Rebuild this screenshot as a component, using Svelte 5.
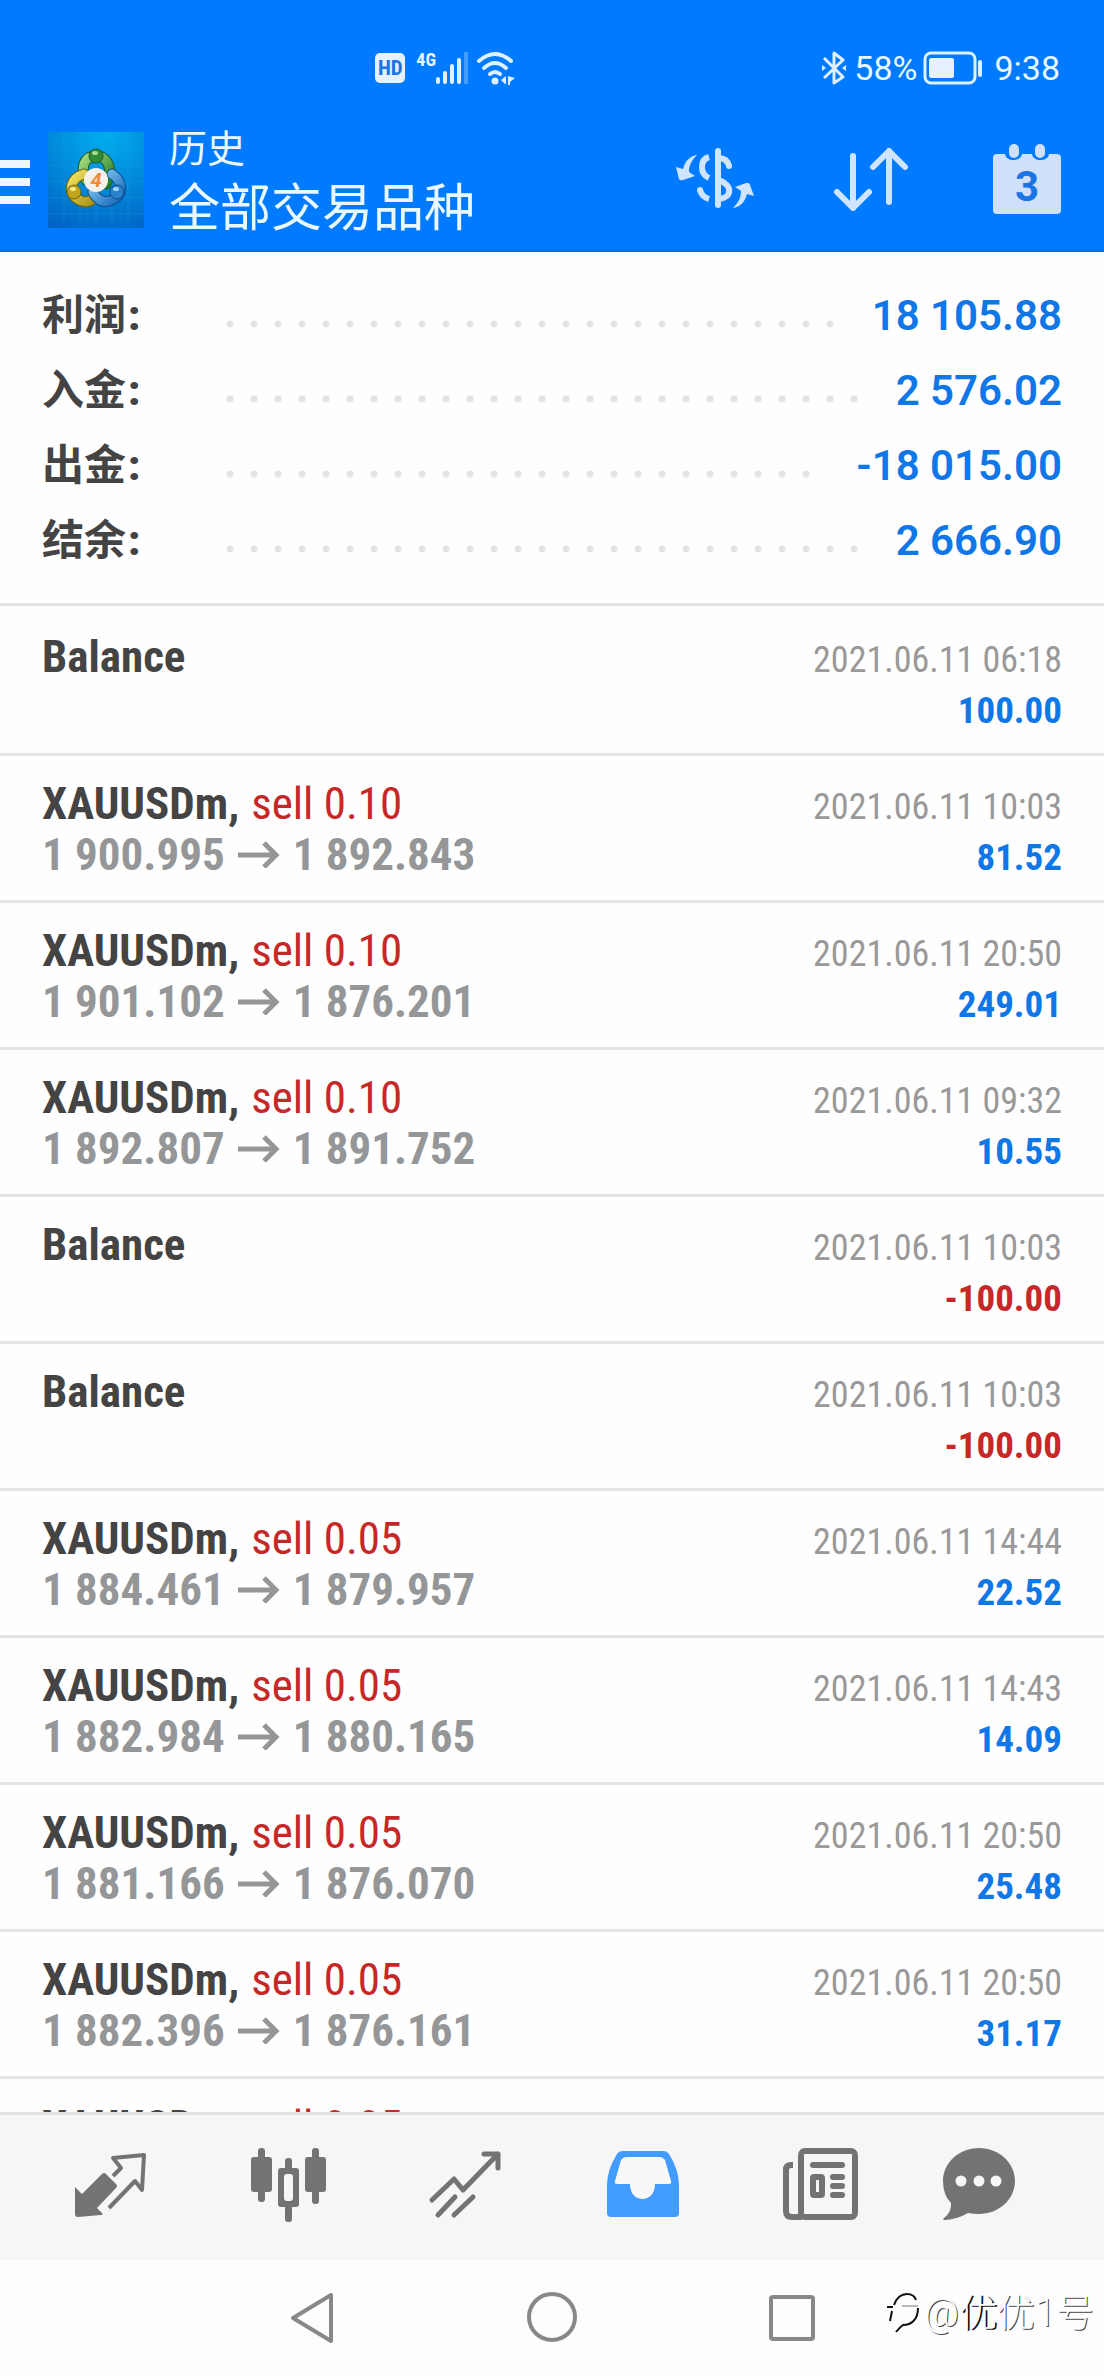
<script>
  const summary = [
    { label: '利润', value: '18 105.88' },
    { label: '入金', value: '2 576.02' },
    { label: '出金', value: '-18 015.00' },
    { label: '结余', value: '2 666.90' },
  ];

  const deals = [
    { name: 'Balance', time: '2021.06.11 06:18', profit: '100.00' },
    { name: 'XAUUSDm,', side: 'sell 0.10', from: '1 900.995', to: '1 892.843', time: '2021.06.11 10:03', profit: '81.52' },
    { name: 'XAUUSDm,', side: 'sell 0.10', from: '1 901.102', to: '1 876.201', time: '2021.06.11 20:50', profit: '249.01' },
    { name: 'XAUUSDm,', side: 'sell 0.10', from: '1 892.807', to: '1 891.752', time: '2021.06.11 09:32', profit: '10.55' },
    { name: 'Balance', time: '2021.06.11 10:03', profit: '-100.00' },
    { name: 'Balance', time: '2021.06.11 10:03', profit: '-100.00' },
    { name: 'XAUUSDm,', side: 'sell 0.05', from: '1 884.461', to: '1 879.957', time: '2021.06.11 14:44', profit: '22.52' },
    { name: 'XAUUSDm,', side: 'sell 0.05', from: '1 882.984', to: '1 880.165', time: '2021.06.11 14:43', profit: '14.09' },
    { name: 'XAUUSDm,', side: 'sell 0.05', from: '1 881.166', to: '1 876.070', time: '2021.06.11 20:50', profit: '25.48' },
    { name: 'XAUUSDm,', side: 'sell 0.05', from: '1 882.396', to: '1 876.161', time: '2021.06.11 20:50', profit: '31.17' },
    { name: 'XAUUSDm,', side: 'sell 0.05' },
  ];
</script>

<div class="screen">
  <header>
    <div class="status">
      <div class="group">
        <span class="hd">HD</span>
        <span class="net">4G</span>
        <svg class="signal" width="33" height="32" viewBox="0 0 33 32" fill="#dff0ff" aria-hidden="true">
          <rect x="0" y="25" width="4" height="7" rx="2" />
          <rect x="7" y="19" width="4" height="13" rx="2" />
          <rect x="14" y="12" width="4" height="20" rx="2" />
          <rect x="21" y="6" width="4" height="26" rx="2" />
          <rect x="28" y="0" width="4" height="32" rx="1" opacity=".3" />
        </svg>
        <svg width="38" height="34" viewBox="0 0 38 34" aria-hidden="true">
          <g fill="none" stroke="#dff0ff" stroke-width="4" stroke-linecap="round">
            <path d="M2 10Q18 -4 34 10" />
            <path d="M7 17Q18 7 29 17" />
            <path d="M13 23Q18 19 23 23" />
          </g>
          <circle cx="18" cy="30" r="3.5" fill="#dff0ff" />
          <path d="M29 25v8h-1l-4-4zM31 25v9h2v-3l5-4z" fill="#dff0ff" />
        </svg>
      </div>
      <div class="group right">
        <svg class="bt" width="24" height="34" viewBox="0 0 24 34" fill="none" stroke="#dff0ff" stroke-width="3" stroke-linejoin="round" aria-hidden="true">
          <path d="M2 7l19 19-9 6V2l9 7L2 27" />
          <path d="M0 14l4 3-4 3zM24 14l-4 3 4 3z" fill="#dff0ff" stroke="none" />
        </svg>
        <span>58%</span>
        <svg class="battery" width="60" height="34" viewBox="0 0 60 34" aria-hidden="true">
          <rect x="2" y="2" width="50" height="30" rx="6" fill="none" stroke="#dff0ff" stroke-width="3" />
          <rect x="6" y="7" width="25" height="20" rx="2" fill="#e6f1ff" />
          <rect x="55" y="9" width="4" height="17" rx="2" fill="#dff0ff" />
        </svg>
        <span>9:38</span>
      </div>
    </div>

    <div class="bar">
      <button class="menu" aria-label="菜单"><i></i><i></i><i></i></button>
      <svg class="logo" width="96" height="96" viewBox="0 0 96 96" aria-hidden="true">
        <defs>
          <radialGradient id="sky" cx=".6" cy="0" r="1.1">
            <stop offset="0" stop-color="#00aeee" />
            <stop offset=".5" stop-color="#008bdc" />
            <stop offset="1" stop-color="#0064c4" />
          </radialGradient>
          <linearGradient id="green" x1="0" y1="0" x2="1" y2="1">
            <stop offset="0" stop-color="#a4dc7c" /><stop offset="1" stop-color="#22802a" />
          </linearGradient>
          <linearGradient id="gold" x1="0" y1="0" x2="1" y2="1">
            <stop offset="0" stop-color="#f0e460" /><stop offset="1" stop-color="#a89010" />
          </linearGradient>
          <linearGradient id="azure" x1="0" y1="0" x2="1" y2="1">
            <stop offset="0" stop-color="#8cd0f8" /><stop offset="1" stop-color="#1468b8" />
          </linearGradient>
        </defs>
        <rect width="96" height="96" fill="url(#sky)" />
        <path d="M16 0v96M32 0v96M48 0v96M64 0v96M80 0v96M0 18h96M0 34h96M0 50h96M0 66h96M0 82h96" stroke="#4fc3f7" stroke-opacity=".15" />
        <g fill="none" stroke-linecap="round">
          <path d="M38 48C32 36 36 24 48 24S66 38 58 52" stroke="#1c5a24" stroke-width="11" />
          <path d="M38 48C32 36 36 24 48 24S66 38 58 52" stroke="url(#green)" stroke-width="9" />
          <path d="M36 42C22 46 20 60 28 66S44 70 48 64" stroke="#6f6210" stroke-width="11" />
          <path d="M36 42C22 46 20 60 28 66S44 70 48 64" stroke="url(#gold)" stroke-width="9" />
          <path d="M64 42C76 50 74 62 66 67S50 70 45 60" stroke="#104a86" stroke-width="11" />
          <path d="M64 42C76 50 74 62 66 67S50 70 45 60" stroke="url(#azure)" stroke-width="9" />
        </g>
        <circle cx="48" cy="24" r="7" fill="#2f8c34" stroke="#1c5a24" />
        <circle cx="26" cy="60" r="7" fill="#c0a41c" stroke="#6f6210" />
        <circle cx="69" cy="60" r="7" fill="#2c80cc" stroke="#104a86" />
        <ellipse cx="47" cy="21" rx="3" ry="2" fill="#a8dc90" />
        <ellipse cx="25" cy="57" rx="3" ry="2" fill="#f4e888" />
        <ellipse cx="68" cy="57" rx="3" ry="2" fill="#a0d4fa" />
        <circle cx="48" cy="48" r="12" fill="#f4f0ec" />
        <text x="48" y="55" text-anchor="middle" font-family="Roboto, sans-serif" font-size="20" font-weight="700" font-style="italic" fill="#f08a34">4</text>
      </svg>
      <div class="titles">
        <span class="section">历史</span>
        <h1>全部交易品种</h1>
      </div>
      <div class="actions">
        <button aria-label="货币">
          <svg width="80" height="72" viewBox="14 14 80 72" fill="none" stroke="#cfe5ff" stroke-width="6" aria-hidden="true">
            <path d="M36 25C29 26 24 31 22 39L15 37L18 49Q19 51 22 50L34 46L28 42C28 35 31 30 36 25Z" fill="#cfe5ff" stroke="none" />
            <path d="M72 78C79 77 84 72 86 64L93 66L89 55Q88 52 85 53L74 57L80 61C80 68 77 73 72 78Z" fill="#cfe5ff" stroke="none" />
            <path d="M57 21V75" stroke-linecap="round" />
            <path d="M48 27Q41 29 41 37Q41 45 48 48M57 28C64 28 67 31 68 36M57 50C72 54 72 68 57 69M39 60Q41 67 48 69" />
            <circle cx="68" cy="36" r="3" fill="#cfe5ff" stroke="none" />
            <circle cx="39" cy="60" r="3" fill="#cfe5ff" stroke="none" />
          </svg>
        </button>
        <button aria-label="排序">
          <svg width="80" height="72" viewBox="0 0 80 72" fill="none" stroke="#cfe5ff" stroke-width="6" stroke-linecap="round" stroke-linejoin="round" aria-hidden="true">
            <path d="M22 12V64M6 48L22 64L38 48M58 58V7M42 23L58 7L74 23" />
          </svg>
        </button>
        <button aria-label="日期">
          <svg width="80" height="72" viewBox="0 0 80 72" fill="#cfe0fb" aria-hidden="true">
            <path d="M10 10H18C19 18 34 18 35 10H45C46 18 61 18 62 10H70Q74 10 74 14V66Q74 70 70 70H10Q6 70 6 66V14Q6 10 10 10Z" />
            <rect x="22" y="0" width="10" height="14" rx="5" />
            <rect x="48" y="0" width="10" height="14" rx="5" />
            <text x="40" y="57" text-anchor="middle" font-family="Roboto, sans-serif" font-size="42" font-weight="700" fill="#1a74e6">3</text>
          </svg>
        </button>
      </div>
    </div>
  </header>

  <dl class="summary">
    {#each summary as item}
      <div>
        <dt>{item.label}<b>:</b></dt>
        <dd class="leader" aria-hidden="true"></dd>
        <dd>{item.value}</dd>
      </div>
    {/each}
  </dl>

  <ul class="deals">
    {#each deals as deal}
      <li>
        <div class="line">
          <span class="name">{deal.name}</span>
          {#if deal.side}<span class="side">{deal.side}</span>{/if}
          {#if deal.time}<time>{deal.time}</time>{/if}
        </div>
        <div class="line">
          {#if deal.from}
            <span class="price">{deal.from}</span>
            <svg class="arrow" width="42" height="27" viewBox="0 0 42 27" fill="none" stroke="#949698" stroke-width="5" aria-label="→" role="img">
              <path d="M0 14H38M26 2L38 14L26 26" />
            </svg>
            <span class="price">{deal.to}</span>
          {/if}
          {#if deal.profit}
            <span class="profit" class:loss={deal.profit.startsWith('-')}>{deal.profit}</span>
          {/if}
        </div>
      </li>
    {/each}
  </ul>

  <nav class="tabs">
    <button aria-label="行情">
      <svg width="76" height="76" viewBox="0 0 76 76" fill="#737373" aria-hidden="true">
        <path d="M2 40L9 47L29 27Q31 25 33 27L43 37Q45 39 43 41L24 61L29 66Q30 68 28 68L5 70Q2 70 2 67Z" />
        <path d="M40 29L48 21L40 11L71 8L69 43L62 34L36 61" fill="none" stroke="#737373" stroke-width="4" stroke-linejoin="round" />
      </svg>
    </button>
    <button aria-label="图表">
      <svg width="76" height="76" viewBox="0 0 76 76" fill="#737373" aria-hidden="true">
        <rect x="1" y="10" width="21" height="35" rx="3" /><rect x="8" y="1" width="7" height="54" rx="3" />
        <rect x="55" y="10" width="21" height="35" rx="3" /><rect x="62" y="1" width="7" height="56" rx="3" />
        <rect x="35" y="11" width="7" height="64" rx="3" /><rect x="28" y="21" width="21" height="39" rx="3" />
        <rect x="34" y="27" width="9" height="27" rx="3" fill="#f6f6f6" />
      </svg>
    </button>
    <button aria-label="交易">
      <svg width="76" height="76" viewBox="0 0 76 76" fill="none" stroke="#737373" stroke-width="5" stroke-linecap="round" stroke-linejoin="round" aria-hidden="true">
        <path d="M5 53L27 32L36 43L71 7M57 7H71V21M11 68L28 50M27 68L46 50" />
      </svg>
    </button>
    <button aria-label="历史" aria-current="page">
      <svg width="76" height="76" viewBox="0 0 76 76" aria-hidden="true">
        <path d="M18 4H58Q62 4 64 7Q74 23 74 38V66Q74 70 70 70H6Q2 70 2 66V38Q2 23 12 7Q14 4 18 4Z" fill="#429bff" />
        <path d="M21 10H55Q58 10 60 13L66 34Q67 37 64 37H50C50 57 25 57 25 37H12Q9 37 10 34L16 13Q18 10 21 10Z" fill="#f8f8f8" />
      </svg>
    </button>
    <button aria-label="新闻">
      <svg width="76" height="76" viewBox="0 0 76 76" fill="none" stroke="#737373" stroke-width="6" aria-hidden="true">
        <rect x="19" y="4" width="54" height="66" rx="4" />
        <path d="M11 18H9Q4 18 4 23V64Q4 70 10 70H20" />
        <path d="M31 18H60M51 30H60M51 39H60M51 48H60" stroke-linecap="round" />
        <rect x="31" y="30" width="9" height="18" rx="1" />
      </svg>
    </button>
    <button aria-label="消息">
      <svg width="76" height="76" viewBox="0 0 76 76" aria-hidden="true">
        <path d="M38 1C58 1 74 16 74 34S58 67 38 67Q32 67 27 66Q17 72 4 73Q1 73 3 71Q11 65 10 56Q2 48 2 34C2 16 18 1 38 1Z" fill="#737373" />
        <g fill="#f6f6f6"><circle cx="20" cy="34" r="5.5" /><circle cx="38" cy="34" r="5.5" /><circle cx="55" cy="34" r="5.5" /></g>
      </svg>
    </button>
  </nav>

  <footer>
    <button aria-label="返回">
      <svg width="60" height="60" viewBox="0 0 60 60" fill="none" stroke="#888" stroke-width="4" stroke-linejoin="round" aria-hidden="true"><path d="M49 7V53L11 30Z" /></svg>
    </button>
    <button aria-label="主页">
      <svg width="60" height="60" viewBox="0 0 60 60" fill="none" stroke="#888" stroke-width="4" aria-hidden="true"><circle cx="30" cy="29" r="23" /></svg>
    </button>
    <button aria-label="最近任务">
      <svg width="60" height="60" viewBox="0 0 60 60" fill="none" stroke="#888" stroke-width="4" aria-hidden="true"><rect x="9" y="9" width="42" height="42" rx="2" /></svg>
    </button>
    <div class="watermark">
      <svg width="34" height="42" viewBox="0 0 34 42" fill="none" stroke="#111" stroke-width="2" aria-hidden="true">
        <path d="M0 15H6M7 13Q11 2 20 2Q27 2 29 8M5 19L3 29" />
        <path d="M15 14H31" stroke-width="1" stroke="#777" />
        <path d="M31 16C31 28 24 33 16 33Q13 35 9 40" />
      </svg>
      <span>@<em>优</em>优1号</span>
    </div>
  </footer>
</div>

<style>
  :global(body) {
    margin: 0;
    background: #fefefe;
  }
  .screen {
    display: flex;
    flex-direction: column;
    height: 100vh;
    background: #fefefe;
    font-family: Roboto, "Noto Sans CJK SC", sans-serif;
    color: #444;
    overflow: hidden;
  }
  button {
    border: 0;
    padding: 0;
    margin: 0;
    background: none;
    font: inherit;
    display: flex;
    align-items: center;
    justify-content: center;
  }
  svg {
    display: block;
    flex: none;
  }
  header {
    flex: none;
    background: #007aff;
    border-bottom: 3px solid #0a6fdc;
    color: #e9f8ff;
  }
  .status {
    display: flex;
    justify-content: space-between;
    align-items: flex-start;
    height: 61px;
    padding: 50px 44px 0 34%;
    line-height: 36px;
  }
  .group {
    display: flex;
    align-items: center;
    height: 36px;
  }
  .right {
    font-size: 34px;
  }
  .hd {
    width: 30px;
    height: 30px;
    border-radius: 5px;
    background: #e6f1ff;
    color: #1a74e6;
    font-family: "Roboto Condensed", Roboto, sans-serif;
    font-size: 21px;
    font-weight: 700;
    line-height: 30px;
    text-align: center;
  }
  .net {
    align-self: flex-start;
    margin-left: 11px;
    font-family: "Roboto Condensed", Roboto, sans-serif;
    font-size: 18px;
    font-weight: 700;
    line-height: 20px;
  }
  .signal {
    margin-right: 8px;
  }
  .bt {
    margin-right: 8px;
  }
  .battery {
    margin: 0 11px 0 6px;
  }
  .bar {
    display: flex;
    align-items: center;
    height: 138px;
    padding-right: 37px;
  }
  .menu {
    flex-direction: column;
    gap: 10px;
    width: 30px;
    margin: 3px 18px 0 0;
  }
  .menu i {
    width: 100%;
    height: 8px;
    background: #eef7ff;
  }
  .titles {
    margin-left: 25px;
    padding-bottom: 2px;
    flex: 1;
    min-width: 0;
  }
  .section {
    display: block;
    font-size: 38px;
    line-height: 60px;
  }
  h1 {
    margin: 0;
    font-size: 51px;
    font-weight: 400;
    line-height: 60px;
    white-space: nowrap;
  }
  .actions {
    display: flex;
    gap: 76px;
  }
  .summary {
    flex: none;
    margin: 0;
    padding: 26px 42px 25px;
    border-bottom: 3px solid #e3e3e3;
  }
  .summary div {
    display: flex;
    align-items: center;
    height: 75px;
    font-size: 42px;
    line-height: 75px;
    font-weight: 600;
    white-space: nowrap;
  }
  dt {
    width: 176px;
    font-weight: 700;
  }
  dt b {
    margin-left: 2px;
  }
  dd {
    margin: 0;
    color: #0f77e8;
  }
  .leader {
    flex: 1;
    height: 8px;
    margin: 16px 32px 0 0;
    background: radial-gradient(circle at center, #e3e3e3 3px, transparent 4px) 0 0 / 24px 8px repeat-x;
  }
  .deals {
    flex: 1;
    min-height: 0;
    overflow: hidden;
    margin: 0;
    padding: 3px 0 0;
    list-style: none;
    font-family: "Roboto Condensed", Roboto, sans-serif;
    font-size: 45px;
  }
  li {
    padding: 22px 42px 20px;
    border-bottom: 3px solid #e3e3e3;
  }
  .line {
    display: flex;
    align-items: baseline;
    height: 51px;
    line-height: 51px;
    white-space: nowrap;
  }
  .line::before {
    content: "\200b";
  }
  .name {
    font-weight: 700;
  }
  .side {
    margin-left: 12px;
    color: #c62828;
  }
  .price {
    font-weight: 700;
    color: #949698;
  }
  .arrow {
    align-self: center;
    margin: 0 13px;
  }
  time,
  .profit {
    margin-left: auto;
    font-size: 36px;
    line-height: 36px;
  }
  time {
    color: #999;
  }
  .profit {
    font-size: 37px;
    font-weight: 700;
    color: #0f77e8;
  }
  .loss {
    color: #c62828;
  }
  .tabs {
    flex: none;
    display: grid;
    grid-template-columns: repeat(5, 177fr) 141fr;
    box-sizing: border-box;
    height: 148px;
    padding: 0 54px 6px 22px;
    background: #f6f6f6;
    border-top: 3px solid #e3e3e3;
  }
  footer {
    flex: none;
    position: relative;
    display: flex;
    justify-content: center;
    gap: 180px;
    height: 116px;
    background: #fdfdfd;
  }
  .watermark {
    position: absolute;
    right: 10px;
    top: 30px;
    display: flex;
    align-items: center;
    gap: 3px;
    color: #fdfdfd;
    font-size: 38px;
    font-weight: 300;
    line-height: 46px;
    text-shadow: 1px 1px 0 #444;
    white-space: nowrap;
  }
  .watermark em {
    font-style: normal;
    text-shadow: 2px 1px 0 #111;
  }
</style>
